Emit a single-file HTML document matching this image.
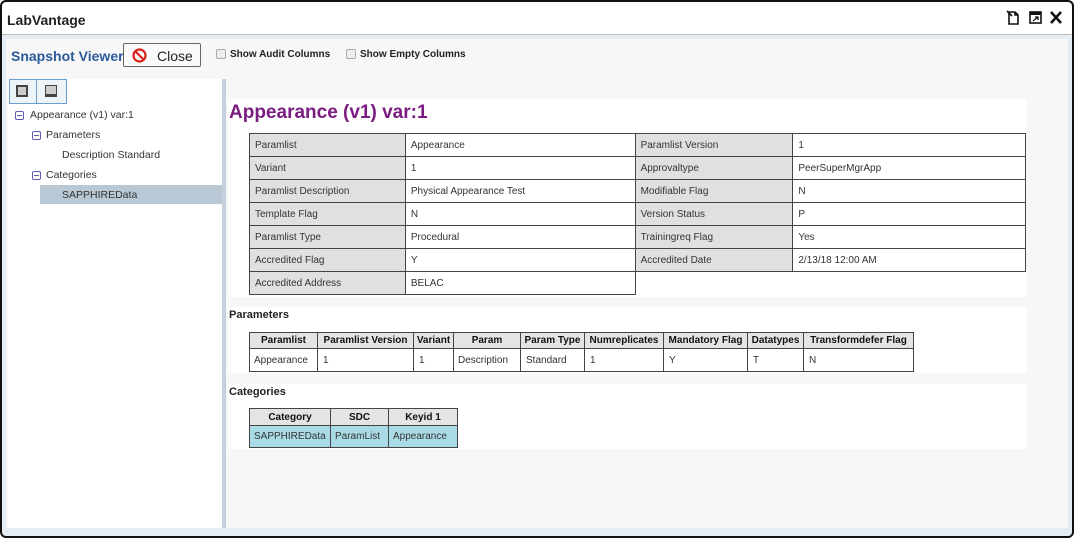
<!DOCTYPE html>
<html><head><meta charset="utf-8"><style>
*{box-sizing:border-box;margin:0;padding:0}
body{width:1074px;height:538px;background:#fff;font-family:"Liberation Sans",sans-serif;position:relative;overflow:hidden}
.frame{position:absolute;left:0;top:0;width:1074px;height:538px;border:2px solid #111;border-radius:6px;background:#e6ecf3}
.title{position:absolute;left:0;top:0;width:1070px;height:33px;background:#fff;border-bottom:1px solid #bbb;border-radius:5px 5px 0 0}
.title span{position:absolute;left:5px;top:10px;font-size:14px;font-weight:bold;color:#222}
.inner{position:absolute;left:4px;top:37px;width:1062px;height:489px;background:#f7f7f7}
.abs{position:absolute}
.hdr{font-size:14px;font-weight:bold;color:#2a5a9a}
.btn{border:1px solid #666;border-radius:2px;background:#fafafa;font-size:14px;color:#222}
.cb{width:10px;height:10px;border:1px solid #aaa;background:#eee;border-radius:2px}
.small{font-size:10px;font-weight:bold;color:#222}
.tree{font-size:10.5px;color:#333}
.minus{width:9px;height:9px;border:1px solid #5b5bb0;border-radius:2px}
.minus:after{content:"";position:absolute;left:1px;top:3px;width:5px;height:1px;background:#5b5bb0}
.block{position:absolute;width:798px;background:#fff}
table{border-collapse:collapse;position:absolute;font-size:10px;color:#333}
td,th{border:1px solid #444;padding:0 5px;white-space:nowrap;text-align:left;font-weight:normal}
.lab{background:#e0e0e0}
th{background:#e4e4e4;font-weight:bold;text-align:center;color:#111;padding:0 1px}
.sec{font-size:11px;font-weight:bold;color:#222}
.cat td{background:#a9dbe6}
</style></head><body>
<div class="frame">
<div class="title"><span>LabVantage</span>
<svg class="abs" style="left:1004px;top:8px" width="60" height="16" viewBox="0 0 60 16">
<path d="M3 2h6l3 3v9H3z M9 2v3h3" fill="none" stroke="#111" stroke-width="1.6"/><path d="M1 1l5 5" stroke="#111" stroke-width="1.6"/>
<rect x="24" y="2" width="11" height="11" fill="none" stroke="#111" stroke-width="1.6"/><rect x="24" y="2" width="11" height="3" fill="#111"/><path d="M27 11l5-4M29 7h3v3" stroke="#111" stroke-width="1.3" fill="none"/>
<path d="M45 2l10 11M55 2L45 13" stroke="#111" stroke-width="2.6"/>
</svg>
</div>
<div class="inner">
<div class="abs hdr" style="left:5px;top:9px">Snapshot Viewer</div>
<div class="abs btn" style="left:117px;top:4px;width:78px;height:24px"><svg class="abs" style="left:8px;top:4px" width="15" height="15" viewBox="0 0 15 15"><circle cx="7.5" cy="7.5" r="6" fill="none" stroke="#d8241b" stroke-width="2.2"/><path d="M3.5 3.5l8 8" stroke="#d8241b" stroke-width="2.2"/></svg><span class="abs" style="left:33px;top:4px">Close</span></div>
<div class="abs cb" style="left:210px;top:10px"></div><div class="abs small" style="left:224px;top:10px">Show Audit Columns</div>
<div class="abs cb" style="left:340px;top:10px"></div><div class="abs small" style="left:354px;top:10px">Show Empty Columns</div>
<div class="abs" style="left:2px;top:40px;width:214px;height:449px;background:#fff"></div>
<div class="abs" style="left:216px;top:40px;width:4px;height:449px;background:#c5d0dc"></div>
<div class="abs" style="left:3px;top:40px;width:58px;height:25px;border:1px solid #6a9fd4;background:#eef3f8"></div>
<div class="abs" style="left:30px;top:40px;width:1px;height:25px;background:#6a9fd4"></div>
<div class="abs" style="left:10px;top:46px;width:12px;height:12px;border:2px solid #444;background:#ccc"></div>
<div class="abs" style="left:39px;top:46px;width:12px;height:12px;border:1px solid #444;background:#ccc;border-bottom:3px solid #444"></div>
<div class="abs minus" style="left:9px;top:72px"></div><div class="abs tree" style="left:24px;top:70px">Appearance (v1) var:1</div>
<div class="abs minus" style="left:26px;top:92px"></div><div class="abs tree" style="left:40px;top:90px">Parameters</div>
<div class="abs tree" style="left:56px;top:110px">Description Standard</div>
<div class="abs minus" style="left:26px;top:132px"></div><div class="abs tree" style="left:40px;top:130px">Categories</div>
<div class="abs" style="left:34px;top:146px;width:182px;height:19px;background:#b8c8d4"></div>
<div class="abs tree" style="left:56px;top:150px">SAPPHIREData</div>
<div class="block" style="top:60px;height:198px;left:222px"></div>
<div class="block" style="top:268px;height:66px;left:222px"></div>
<div class="block" style="top:345px;height:65px;left:222px"></div>
<div class="abs" style="left:223px;top:63px;font-size:19px;font-weight:bold;color:#7a1c80">Appearance (v1) var:1</div>
<table style="left:243px;top:94px;width:777px">
<colgroup><col style="width:156px"><col style="width:230px"><col style="width:158px"><col style="width:233px"></colgroup>
<tr style="height:23px"><td class="lab">Paramlist</td><td>Appearance</td><td class="lab">Paramlist Version</td><td>1</td></tr>
<tr style="height:23px"><td class="lab">Variant</td><td>1</td><td class="lab">Approvaltype</td><td>PeerSuperMgrApp</td></tr>
<tr style="height:23px"><td class="lab">Paramlist Description</td><td>Physical Appearance Test</td><td class="lab">Modifiable Flag</td><td>N</td></tr>
<tr style="height:23px"><td class="lab">Template Flag</td><td>N</td><td class="lab">Version Status</td><td>P</td></tr>
<tr style="height:23px"><td class="lab">Paramlist Type</td><td>Procedural</td><td class="lab">Trainingreq Flag</td><td>Yes</td></tr>
<tr style="height:23px"><td class="lab">Accredited Flag</td><td>Y</td><td class="lab">Accredited Date</td><td>2/13/18 12:00 AM</td></tr>
<tr style="height:23px"><td class="lab">Accredited Address</td><td>BELAC</td><td style="border:none;border-top:1px solid #444"></td><td style="border:none;border-top:1px solid #444"></td></tr>
</table>
<div class="abs sec" style="left:223px;top:270px">Parameters</div>
<table style="left:243px;top:293px;width:665px">
<tr style="height:16px"><th style="width:68px">Paramlist</th><th style="width:96px">Paramlist Version</th><th style="width:40px">Variant</th><th style="width:67px">Param</th><th style="width:64px">Param Type</th><th style="width:79px">Numreplicates</th><th style="width:84px">Mandatory Flag</th><th style="width:56px">Datatypes</th><th>Transformdefer Flag</th></tr>
<tr style="height:23px"><td style="padding:0 4px">Appearance</td><td>1</td><td>1</td><td style="padding:0 4px">Description</td><td>Standard</td><td>1</td><td>Y</td><td>T</td><td>N</td></tr>
</table>
<div class="abs sec" style="left:223px;top:347px">Categories</div>
<table class="cat" style="left:243px;top:369px;width:209px">
<tr style="height:17px"><th style="width:81px">Category</th><th style="width:58px">SDC</th><th>Keyid 1</th></tr>
<tr style="height:22px"><td style="padding:0 4px">SAPPHIREData</td><td style="padding:0 4px">ParamList</td><td style="padding:0 4px">Appearance</td></tr>
</table>
</div>
</div>
</body></html>
